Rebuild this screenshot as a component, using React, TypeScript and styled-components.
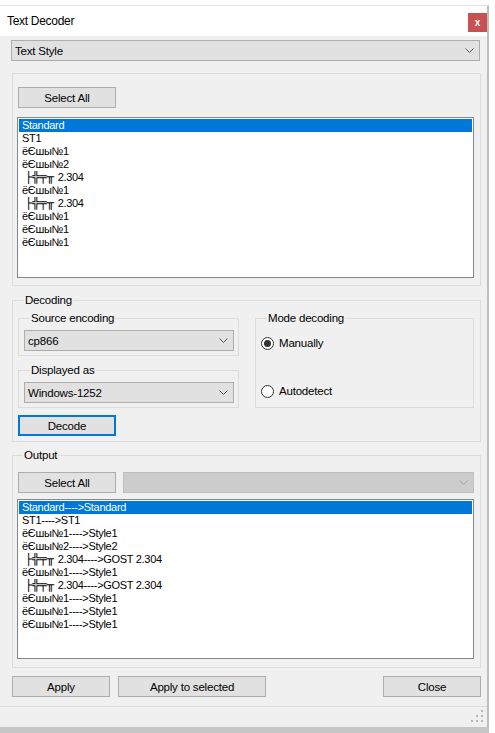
import React from 'react';
import styled, {createGlobalStyle} from 'styled-components';

const GlobalStyle = createGlobalStyle`
  html, body {
    margin: 0;
    padding: 0;
    background: #ffffff;
  }
  body {
    font-family: 'Liberation Sans', Arial, sans-serif;
    font-size: 11.5px;
    letter-spacing: -0.2px;
    color: #000;
  }
  * {
    box-sizing: border-box;
  }
`;

const Page = styled.div`
  width: 495px;
  height: 733px;
  padding-top: 5px;
  overflow: hidden;
`;

const Window = styled.div`
  width: 489px;
  height: 722px;
  border-top: 1px solid #e3e3e3;
  border-right: 2px solid #bdbdbd;
  display: flex;
  flex-direction: column;
  background: #f0f0f0;
`;

const Shadow = styled.div`
  width: 489px;
  height: 6px;
  background: #c6c6c6;
`;

const TitleBar = styled.div`
  height: 30px;
  background: #ffffff;
  display: flex;
  justify-content: space-between;
  align-items: center;
  padding-left: 7px;
  .title {
    font-size: 12px;
    letter-spacing: -0.3px;
  }
`;

const CloseBox = styled.div`
  width: 19px;
  height: 19px;
  align-self: flex-start;
  margin-top: 7px;
  background: #c75050;
  color: #ffffff;
  font-weight: 700;
  font-size: 10px;
  display: flex;
  justify-content: center;
  align-items: center;
  line-height: 1;
`;

const Body = styled.div`
  flex: 1;
  display: flex;
  flex-direction: column;
  padding: 4px 0 0 11px;
`;

const ComboBox = styled.div<{ $disabled?: boolean; $width?: number }>`
  height: 21px;
  width: ${p => (p.$width ? `${p.$width}px` : 'auto')};
  flex: ${p => (p.$width ? 'none' : '1')};
  background: ${p => (p.$disabled ? '#cccccc' : '#e1e1e1')};
  border: 1px solid ${p => (p.$disabled ? '#bfbfbf' : '#adadad')};
  display: flex;
  align-items: center;
  justify-content: space-between;
  padding: 0 5px 0 3px;
  svg {
    flex: none;
  }
`;

const Group = styled.fieldset<{ $pad: string; $width?: number; $mt?: number }>`
  margin: ${p => p.$mt || 0}px 0 0 0;
  padding: ${p => p.$pad};
  border: 1px solid #dcdcdc;
  min-width: 0;
  width: ${p => (p.$width ? `${p.$width}px` : 'auto')};
  display: block;
  > legend {
    padding: 0 1px;
    margin-left: 6px;
    line-height: 14px;
    height: 14px;
    font-size: 11.5px;
  }
`;

const Button = styled.div<{ $width: number; $focused?: boolean; $ml?: number }>`
  width: ${p => p.$width}px;
  height: 21px;
  margin-left: ${p => p.$ml || 0}px;
  flex: none;
  background: #e1e1e1;
  border: ${p => (p.$focused ? '2px solid #0078d7' : '1px solid #adadad')};
  display: flex;
  justify-content: center;
  align-items: center;
  font-size: 11.5px;
`;

const ListBox = styled.div<{ $height: number; $mt: number }>`
  height: ${p => p.$height}px;
  margin-top: ${p => p.$mt}px;
  background: #ffffff;
  border: 1px solid #828790;
  padding: 1px;
  font-size: 11px;
  letter-spacing: -0.3px;
`;

const ListRow = styled.div<{ $selected?: boolean }>`
  height: 13px;
  line-height: 13px;
  padding-left: 3px;
  white-space: pre;
  overflow: hidden;
  background: ${p => (p.$selected ? '#0078d7' : 'transparent')};
  color: ${p => (p.$selected ? '#ffffff' : '#000000')};
`;

const BoxChars = styled.span`
  font-family: 'DejaVu Sans Mono', monospace;
  font-size: 12px;
  letter-spacing: 0;
  margin-left: 3px;
  margin-right: 1px;
`;

const Row = styled.div<{ $gap: number }>`
  display: flex;
  align-items: center;
  gap: ${p => p.$gap}px;
`;

const DecodeGrid = styled.div`
  display: grid;
  grid-template-columns: 221px 219px;
  column-gap: 16px;
  row-gap: 7px;
  .mode {
    grid-column: 2;
    grid-row: 1 / span 2;
  }
`;

const RadioList = styled.div`
  display: flex;
  flex-direction: column;
  gap: 32px;
  padding-top: 10px;
`;

const Radio = styled.div<{ $checked?: boolean }>`
  display: flex;
  align-items: center;
  height: 16px;
  gap: 5px;
  .dot {
    width: 13px;
    height: 13px;
    border-radius: 50%;
    border: 1px solid #333333;
    background: #ffffff;
    display: flex;
    justify-content: center;
    align-items: center;
    &::after {
      content: '';
      width: 7px;
      height: 7px;
      border-radius: 50%;
      background: ${p => (p.$checked ? '#333333' : 'transparent')};
    }
  }
`;

const Footer = styled.div`
  display: flex;
  align-items: center;
  margin-top: 8px;
  padding-left: 1px;
  width: 470px;
  .spacer {
    flex: 1;
  }
`;

const Separator = styled.div`
  height: 1px;
  margin: 9px 0 0 -11px;
  background: #dcdcdc;
`;

const StatusStrip = styled.div`
  height: 20px;
  margin-left: -11px;
  display: flex;
  justify-content: flex-end;
  align-items: flex-end;
  padding: 0 2px 3px 0;
`;

const Chevron = ({color = '#555555'}: { color?: string }) => (
  <svg width="9" height="5" viewBox="0 0 9 5">
    <polyline points="0.5,0.5 4.5,4.5 8.5,0.5" fill="none" stroke={color} strokeWidth="1"/>
  </svg>
);

const Grip = () => (
  <svg width="14" height="14" viewBox="0 0 14 14">
    <rect x="10" y="0" width="2" height="2" fill="#b8b8b8"/>
    <rect x="5" y="5" width="2" height="2" fill="#b8b8b8"/>
    <rect x="10" y="5" width="2" height="2" fill="#b8b8b8"/>
    <rect x="0" y="10" width="2" height="2" fill="#b8b8b8"/>
    <rect x="5" y="10" width="2" height="2" fill="#b8b8b8"/>
    <rect x="10" y="10" width="2" height="2" fill="#b8b8b8"/>
  </svg>
);

const GOST = '├╬╤╥';

const styles = [
  'Standard',
  'ST1',
  'ёЄшы№1',
  'ёЄшы№2',
  `${GOST} 2.304`,
  'ёЄшы№1',
  `${GOST} 2.304`,
  'ёЄшы№1',
  'ёЄшы№1',
  'ёЄшы№1'
];

const output = [
  'Standard---->Standard',
  'ST1---->ST1',
  'ёЄшы№1---->Style1',
  'ёЄшы№2---->Style2',
  `${GOST} 2.304---->GOST 2.304`,
  'ёЄшы№1---->Style1',
  `${GOST} 2.304---->GOST 2.304`,
  'ёЄшы№1---->Style1',
  'ёЄшы№1---->Style1',
  'ёЄшы№1---->Style1'
];

// box-drawing prefix gets its own font so the strokes join up
const renderItem = (text: string) => {
  if (!text.startsWith(GOST)) return text;
  return (
    <>
      <BoxChars>{GOST}</BoxChars>
      {text.slice(GOST.length)}
    </>
  );
};

const App = () => {
  return (
    <Page>
      <GlobalStyle/>
      <Window>
        <TitleBar>
          <span className="title">Text Decoder</span>
          <CloseBox>x</CloseBox>
        </TitleBar>
        <Body>
          <ComboBox $width={469}>
            <span>Text Style</span>
            <Chevron/>
          </ComboBox>

          <Group $pad="13px 6px 7px 4px" $width={469} $mt={12} style={{marginLeft: 1}}>
            <Button $width={98} $ml={1}>Select All</Button>
            <ListBox $height={161} $mt={9}>
              {styles.map((s, i) => (
                <ListRow key={i} $selected={i === 0}>{renderItem(s)}</ListRow>
              ))}
            </ListBox>
          </Group>

          <Group $pad="4px 6px 5px 5px" $width={469} $mt={7} style={{marginLeft: 1}}>
            <legend>Decoding</legend>
            <DecodeGrid>
              <Group $pad="5px 4px 4px 5px">
                <legend>Source encoding</legend>
                <ComboBox>
                  <span>cp866</span>
                  <Chevron/>
                </ComboBox>
              </Group>
              <Group $pad="0 4px 0 5px" className="mode">
                <legend>Mode decoding</legend>
                <RadioList>
                  <Radio $checked>
                    <span className="dot"/>
                    <span>Manually</span>
                  </Radio>
                  <Radio>
                    <span className="dot"/>
                    <span>Autodetect</span>
                  </Radio>
                </RadioList>
              </Group>
              <Group $pad="5px 4px 4px 5px">
                <legend>Displayed as</legend>
                <ComboBox>
                  <span>Windows-1252</span>
                  <Chevron/>
                </ComboBox>
              </Group>
              <Button $width={98} $focused>Decode</Button>
            </DecodeGrid>
          </Group>

          <Group $pad="10px 6px 8px 4px" $width={469} $mt={6} style={{marginLeft: 1}}>
            <legend>Output</legend>
            <Row $gap={7}>
              <Button $width={98} $ml={1}>Select All</Button>
              <ComboBox $disabled>
                <span/>
                <Chevron color="#a6a6a6"/>
              </ComboBox>
            </Row>
            <ListBox $height={160} $mt={6}>
              {output.map((s, i) => (
                <ListRow key={i} $selected={i === 0}>{renderItem(s)}</ListRow>
              ))}
            </ListBox>
          </Group>

          <Footer>
            <Button $width={98}>Apply</Button>
            <Button $width={148} $ml={8}>Apply to selected</Button>
            <span className="spacer"/>
            <Button $width={98}>Close</Button>
          </Footer>
          <Separator/>
          <StatusStrip>
            <Grip/>
          </StatusStrip>
        </Body>
      </Window>
      <Shadow/>
    </Page>
  );
};

export default App;
